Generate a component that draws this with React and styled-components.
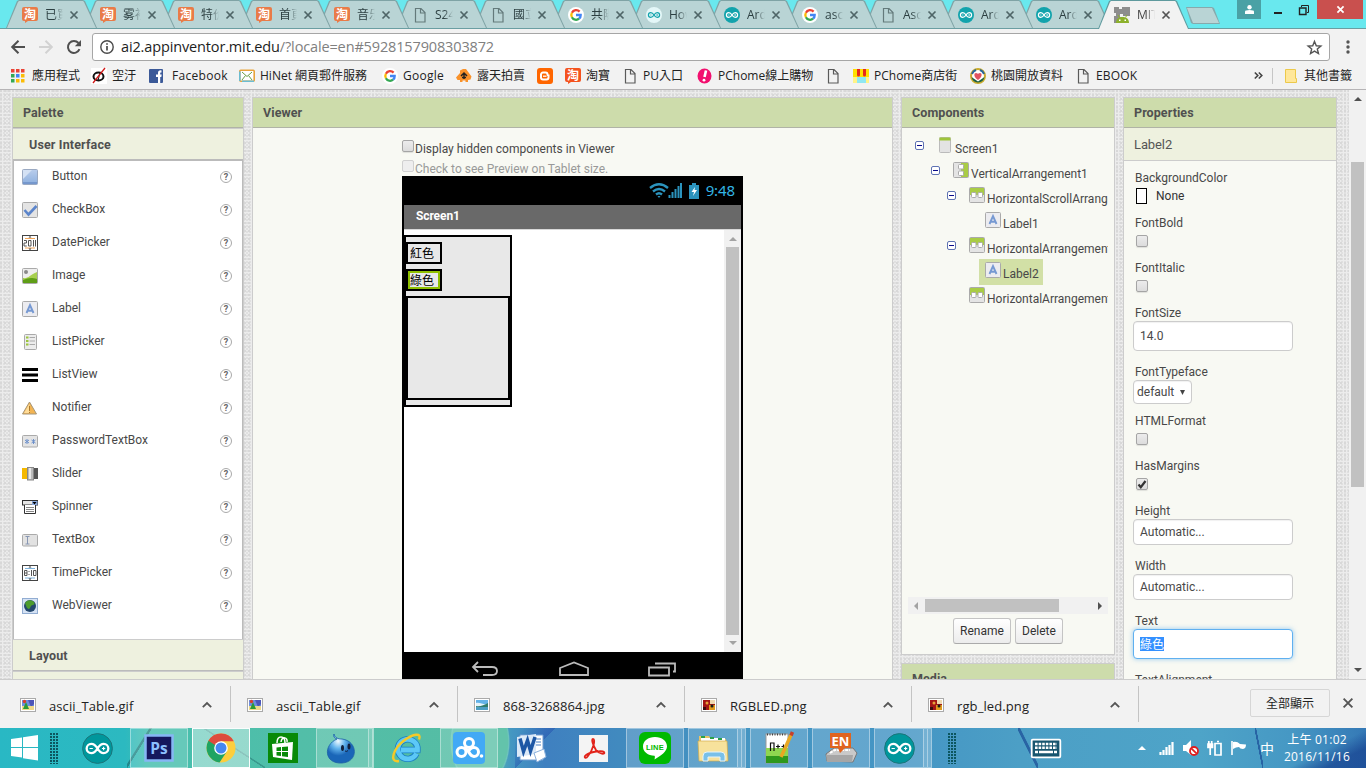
import React from "react";
import styled, { createGlobalStyle, css } from "styled-components";

const UI = `"Open Sans", "Noto Sans CJK TC", sans-serif`;
const CJK = `"Noto Sans CJK TC", "Open Sans", sans-serif`;
const RB = `Roboto, "Noto Sans CJK TC", sans-serif`;

const Global = createGlobalStyle`
  * { box-sizing: border-box; }
  html, body { margin: 0; padding: 0; overflow: hidden; }
  body { font-family: ${UI}; font-size: 12px; color: #333; }
  svg { display: block; flex: none; overflow: visible; }
`;

const Screen = styled.div`
  width: 1366px;
  height: 768px;
  display: flex;
  flex-direction: column;
  overflow: hidden;
  background: #f2f2f2;
`;

/* ---------- tab strip ---------- */
const TabStrip = styled.div`
  height: 29px;
  flex: none;
  display: flex;
  align-items: flex-start;
  padding-left: 6px;
  background: #69e8ee;
  border-bottom: 1px solid #6a9ea2;
  position: relative;
`;
const TabBox = styled.div`
  width: 78px;
  height: 28px;
  flex: none;
  position: relative;
  z-index: ${(p) => p.$z};
  display: flex;
  align-items: center;
  padding: 2px 0 0 16px;
  &::before, &::after {
    content: "";
    position: absolute;
    z-index: -1;
    left: 0;
    top: 0;
    width: 91px;
    height: ${(p) => (p.$active ? 29 : 28)}px;
    background: ${(p) => (p.$active ? "#5f9a9e" : "#7fa3a5")};
    clip-path: polygon(0 100%, 11px 1px, 13px 0, 77px 0, 79px 1px, 91px 100%);
  }
  &::after {
    background: ${(p) => (p.$active ? "#f2f2f2" : "#b9d4d5")};
    clip-path: polygon(1px 100%, 12px 2px, 13px 1px, 77px 1px, 78px 2px, 90px 100%);
  }
`;
const TabTitle = styled.span`
  width: 18px;
  margin-left: 7px;
  overflow: hidden;
  white-space: nowrap;
  font: 12px/18px ${UI};
  color: ${(p) => (p.$active ? "#444" : "#2c3f41")};
  mask-image: linear-gradient(90deg, #000 50%, transparent 100%);
`;
const TabClose = styled.span`
  display: flex;
  margin-left: 7px;
`;
const NewTab = styled.div`
  width: 34px;
  height: 17px;
  margin: 7px 0 0 10px;
  background: #86a9ac;
  clip-path: polygon(0 0, 26px 0, 28px 1px, 34px 100%, 7px 100%, 5px 94%);
  &::after {
    content: "";
    display: block;
    width: 34px;
    height: 17px;
    background: #b9d4d5;
    clip-path: polygon(1px 1px, 26px 1px, 33px 16px, 7px 16px);
  }
`;
const WinControls = styled.div`
  margin-left: auto;
  display: flex;
  height: 19px;
`;
const WinBtn = styled.div`
  width: ${(p) => p.$w}px;
  height: 19px;
  margin-right: ${(p) => p.$mr || 0}px;
  background: ${(p) => p.$bg || "transparent"};
  display: flex;
  align-items: center;
  justify-content: center;
`;

/* ---------- toolbar ---------- */
const Toolbar = styled.div`
  height: 34px;
  flex: none;
  display: flex;
  align-items: center;
  padding: 2px 0 0 10px;
`;
const NavBtn = styled.div`
  width: 28px;
  height: 16px;
  flex: none;
`;
const Omnibox = styled.div`
  width: 1238px;
  height: 28px;
  margin: 0 16px 0 -2px;
  border: 1px solid #a6a6a6;
  border-radius: 3px;
  background: #fff;
  display: flex;
  align-items: center;
  padding: 0 7px 0 7px;
`;
const Url = styled.span`
  flex: 1;
  margin-left: 7px;
  white-space: nowrap;
  font: 14.5px/24px ${UI};
  letter-spacing: -0.14px;
  color: #808080;
  b { font-weight: 400; color: #1d1d1d; }
`;

/* ---------- bookmarks ---------- */
const Bookmarks = styled.div`
  height: 27px;
  flex: none;
  display: flex;
  align-items: center;
  padding: 0 0 1px 9px;
  border-bottom: 1px solid #b6b4b6;
`;
const Bookmark = styled.div`
  width: ${(p) => p.$w}px;
  flex: none;
  display: flex;
  align-items: center;
  gap: ${(p) => p.$gap || 5}px;
  white-space: nowrap;
  font: 12px/18px ${UI};
  letter-spacing: ${(p) => p.$ls || 0}px;
  color: #222;
`;
const Overflow = styled.div`
  width: 137px;
  flex: none;
  display: flex;
  justify-content: flex-end;
  padding-right: 9px;
`;
const BookmarkSep = styled.div`
  width: 1px;
  height: 16px;
  margin-right: 11px;
  background: #c6c6c6;
`;

/* ---------- page ---------- */
const Page = styled.div`
  height: 589px;
  flex: none;
  display: flex;
  align-items: flex-start;
  overflow: hidden;
  padding-left: 12px;
  background-color: #ececec;
  background-image:
    radial-gradient(circle at 1px 1px, #d8d8d8 0.8px, transparent 1px),
    radial-gradient(circle at 1px 1px, #e0e0e0 0.8px, transparent 1px);
  background-size: 4px 4px, 3px 3px;
`;
const Column = styled.div`
  width: ${(p) => p.$w}px;
  margin: 7px ${(p) => p.$mr}px 0 0;
  display: flex;
  flex-direction: column;
  gap: 8px;
  flex: none;
`;
const Panel = styled.div`
  height: ${(p) => p.$h || 620}px;
  flex: none;
  border: 1px solid #ccc;
  background: #f8f9f3;
`;
const PanelHead = styled.div`
  height: 30px;
  padding-left: 10px;
  background: #cddcab;
  border-bottom: 1px solid #b0b3a6;
  font: bold 12.5px/30px ${RB};
  letter-spacing: 0.08px;
  color: #505050;
`;
const PaletteHead = styled.div`
  height: 32px;
  padding-left: 16px;
  background: #eef1df;
  border-top: 1px solid #ccc;
  border-bottom: 1px solid #bbb;
  font: bold 12.5px/31px ${RB};
  letter-spacing: 0.15px;
  color: #505050;
`;
const PaletteBody = styled.div`
  height: 479px;
  background: #fff;
  border: 1px solid #bbb;
  border-bottom: 0;
  & > :first-child { margin-top: -1px; }
`;
const PaletteRow = styled.div`
  height: 33px;
  display: flex;
  align-items: center;
  padding: 0 9px 0 8px;
  font: 12px/18px ${RB};
  color: #484848;
`;
const PaletteName = styled.span`
  flex: 1;
  margin-left: 14px;
  padding-bottom: 2px;
`;
const Help = styled.span`
  width: 12px;
  height: 12px;
  margin-right: 1px;
  border: 1px solid #aaa;
  border-radius: 50%;
  font: bold 9px/10px ${RB};
  text-align: center;
  color: #666;
`;

/* ---------- viewer ---------- */
const Stage = styled.div`
  padding: 11px 0 0 149px;
`;
const CheckLine = styled.div`
  height: ${(p) => (p.$off ? 17 : 20)}px;
  display: flex;
  align-items: flex-start;
  gap: 1px;
  font: 12px/20px ${RB};
  color: ${(p) => (p.$off ? "#999" : "#484848")};
`;
const Check = styled.i`
  width: 12px;
  height: 12px;
  flex: none;
  margin-top: 1px;
  border: 1px solid ${(p) => (p.$off ? "#d0d0d0" : "#a5a5a5")};
  border-radius: 2px;
  background: ${(p) => (p.$off ? "#eee" : "linear-gradient(#ececec, #dcdcdc)")};
  box-shadow: ${(p) => (p.$off ? "none" : "0 1px 1px rgba(0,0,0,.1)")};
`;
const Phone = styled.div`
  width: 341px;
  height: 510px;
  background: #000;
  padding: 0 2px;
`;
const StatusBar = styled.div`
  height: 29px;
  display: flex;
  align-items: center;
  justify-content: flex-end;
  gap: 7px;
  padding-right: 6px;
  color: #33b5e5;
  font: 15px/29px "Noto Sans", sans-serif;
  letter-spacing: -0.1px;
`;
const TitleBar = styled.div`
  height: 25px;
  padding-left: 12px;
  background: #696969;
  border-bottom: 1px solid #d8d8d8;
  font: bold 12px/23px ${RB};
  letter-spacing: -0.1px;
  color: #fff;
`;
const Canvas = styled.div`
  height: 422px;
  display: flex;
  align-items: flex-start;
  background: #fff;
`;
const Arrangement = styled.div`
  width: 108px;
  height: 172px;
  margin: 5px auto 0 0;
  padding: 5px 0;
  display: flex;
  flex-direction: column;
  gap: 5px;
  border: 2px solid #000;
  background: #e8e8e8;
`;
const LabelBox = styled.div`
  width: 36px;
  height: 22px;
  border: 2px solid #000;
  font: 12px/18px ${CJK};
  color: #000;
  & > span {
    display: block;
    height: 18px;
    padding-left: 2px;
    white-space: nowrap;
    line-height: 17px;
    ${(p) => p.$sel && css`box-shadow: inset 0 0 0 2px #8fc000;`}
  }
`;
const EmptyBox = styled.div`
  height: 104px;
  border: 2px solid #000;
`;
const VScroll = styled.div`
  width: 17px;
  height: ${(p) => p.$h}px;
  flex: none;
  display: flex;
  flex-direction: column;
  align-items: center;
  background: #f1f1f1;
  padding: 7px 0;
`;
const Thumb = styled.div`
  width: ${(p) => p.$w}px;
  height: ${(p) => p.$h}px;
  margin: ${(p) => p.$m};
  background: #c1c1c1;
`;
const Arrow = styled.i`
  display: block;
  width: 0;
  height: 0;
  border: 4px solid transparent;
  ${(p) => p.$dir === "up" && css`border-top: 0; border-bottom-color: ${p.$c};`}
  ${(p) => p.$dir === "down" && css`border-bottom: 0; border-top-color: ${p.$c};`}
  ${(p) => p.$dir === "left" && css`border-left: 0; border-right-color: ${p.$c};`}
  ${(p) => p.$dir === "right" && css`border-right: 0; border-left-color: ${p.$c};`}
`;
const NavKeys = styled.div`
  height: 27px;
  display: flex;
  justify-content: space-between;
  padding: 9px 65px 0 67px;
`;

/* ---------- components tree ---------- */
const TreeArea = styled.div`
  height: 469px;
  width: 200px;
  margin: 0 6px;
  padding-top: 6px;
  overflow: hidden;
`;
const TreeRow = styled.div`
  height: 25px;
  display: flex;
  align-items: flex-start;
  padding: 3px 0 0 ${(p) => p.$x}px;
  white-space: nowrap;
  font: 12px/24px ${RB};
  color: #484848;
`;
const TreeToggle = styled.span`
  width: 9px;
  height: 9px;
  flex: none;
  margin: 4px ${(p) => p.$gap}px 0 0;
  border: 1px solid #5f73b3;
  border-radius: 2px;
  background: #fff;
  padding: 3px 1px;
  &::after { content: ""; display: block; height: 1px; background: #0b0b8a; }
`;
const TreeName = styled.span`
  margin-left: ${(p) => p.$ml || 2}px;
`;
const Selected = styled.span`
  height: 26px;
  width: 64px;
  margin: -3px 0 0 0;
  padding: 3px 6px;
  display: flex;
  background: #d2e0a6;
`;
const HScroll = styled.div`
  height: 17px;
  width: 200px;
  margin: 0 6px;
  padding: 0 6px;
  display: flex;
  align-items: center;
  justify-content: space-between;
  background: #f1f1f1;
`;
const Buttons = styled.div`
  display: flex;
  gap: 4px;
  padding: 4px 0 0 51px;
`;
const Btn = styled.div`
  width: ${(p) => p.$w}px;
  height: 26px;
  border: 1px solid #c4c4c4;
  border-bottom-color: #aaa;
  border-radius: 3px;
  background: linear-gradient(#fff, #ececec);
  text-align: center;
  font: 12px/25px ${RB};
  color: #333;
`;

/* ---------- properties ---------- */
const SubHead = styled.div`
  height: 33px;
  padding-left: 10px;
  background: #eef1df;
  border-bottom: 1px solid #ccc;
  font: 13px/33px ${RB};
  letter-spacing: -0.1px;
  color: #555;
`;
const Props = styled.div`
  padding: 9px 0 0 9px;
`;
const Prop = styled.div`
  height: ${(p) => p.$h}px;
`;
const PropLabel = styled.div`
  height: 16px;
  padding-left: 2px;
  font: 12px/16px ${RB};
  color: #484848;
`;
const Field = styled.div`
  width: ${(p) => p.$w || 160}px;
  height: ${(p) => p.$h}px;
  padding-left: ${(p) => p.$pl || 6}px;
  border: 1px solid ${(p) => (p.$focus ? "#5fb0f0" : "#ccc")};
  border-radius: 4px;
  background: #fff;
  display: flex;
  align-items: center;
  gap: 6px;
  font: 12px/16px ${RB};
  color: #484848;
  box-shadow: ${(p) => (p.$focus ? "0 0 5px rgba(82,168,236,.6)" : "inset 0 1px 1px rgba(0,0,0,.06)")};
`;
const Highlight = styled.span`
  height: 14px;
  line-height: 13px;
  font-family: ${CJK};
  background: #3390ff;
  color: #fff;
`;
const PropCheck = styled(Check)`
  display: block;
  margin: 4px 0 0 3px;
`;
const ColorRow = styled.div`
  display: flex;
  align-items: center;
  gap: 9px;
  padding: 2px 0 0 3px;
  font: 12px/16px ${RB};
`;
const Swatch = styled.i`
  width: 11px;
  height: 16px;
  border: 1px solid #000;
  background: #fff;
`;

/* ---------- download shelf ---------- */
const Shelf = styled.div`
  height: 49px;
  flex: none;
  display: flex;
  align-items: flex-start;
  border-top: 1px solid #ccc;
  background: #f2f2f2;
`;
const Download = styled.div`
  width: ${(p) => (p.$first ? 231 : 227)}px;
  height: 36px;
  margin-top: 6px;
  padding: 1px 18px 0 ${(p) => (p.$first ? 20 : 16)}px;
  display: flex;
  align-items: center;
  border-right: 1px solid #c4c4c4;
  color: #222;
  font: 13px/20px ${UI};
  letter-spacing: 0.1px;
`;
const FileName = styled.span`
  flex: 1;
  margin: 3px 0 0 13px;
`;
const ShowAll = styled.div`
  width: 80px;
  height: 28px;
  margin: 9px 13px 0 auto;
  border: 1px solid #d6d6d6;
  border-radius: 2px;
  text-align: center;
  font: 12px/26px ${CJK};
  color: #222;
`;
const ShelfClose = styled.div`
  margin: 18px 13px 0 0;
`;

/* ---------- taskbar ---------- */
const Taskbar = styled.div`
  height: 40px;
  flex: none;
  display: flex;
  align-items: center;
  background:
    linear-gradient(to top left, transparent 49%, rgba(20,85,90,.5) 50% 54%, transparent 56%) 127px 0 / 25px 40px no-repeat,
    linear-gradient(to top right, transparent 49%, rgba(20,85,90,.35) 49.5% 51%, transparent 52%) 203px 0 / 62px 40px no-repeat,
    radial-gradient(ellipse 30px 44px at 480px 14px, #63c3ab 0 92%, rgba(120,205,190,.8) 96%, transparent 100%),
    linear-gradient(to top left, transparent 49%, rgba(30,70,170,.4) 50%, transparent 90%) 515px 0 / 40px 40px no-repeat,
    linear-gradient(to top right, transparent 46%, rgba(25,75,150,.7) 48% 54%, transparent 56%) 1018px 0 / 20px 40px no-repeat,
    linear-gradient(to top right, transparent 44%, rgba(25,75,150,.7) 46% 56%, transparent 58%) 1255px 0 / 8px 40px no-repeat,
    linear-gradient(to bottom right, transparent 52%, rgba(20,60,140,.65) 75%) 1285px 0 / 81px 40px no-repeat,
    linear-gradient(90deg, #29b8c4 0, #2cb9c0 125px, #45bfae 150px, #52bea8 300px, #55bda4 480px, #4fabb4 498px, #4496c2 512px, #3f80c0 545px, #418abf 620px, #4595c2 740px, #4495c4 900px, #4c9fc6 1020px, #4ea4c8 1200px, #4698c4 1290px, #3579b6 1366px);
`;
const StartBtn = styled.div`
  width: 50px;
  padding-left: 11px;
`;
const Grip = styled.div`
  width: 9px;
  height: 31px;
  margin: 0 ${(p) => p.$mr || 0}px 0 ${(p) => p.$ml || 0}px;
  background-image: radial-gradient(circle at 1px 1px, #0c5660 0.9px, transparent 1.1px);
  background-size: 3px 3px;
`;
const Slot = styled.div`
  width: 58px;
  height: 40px;
  margin: 0 2px;
  flex: none;
  display: flex;
  align-items: center;
  justify-content: center;
  padding-right: ${(p) => p.$stack || 0}px;
  ${(p) => p.$open && css`
    border: 1px solid rgba(255,255,255,${p.$active ? 0.95 : 0.4});
    background: rgba(255,255,255,${p.$active ? 0.42 : 0.17});
  `}
  ${(p) => p.$stack && css`
    background-image: repeating-linear-gradient(90deg, rgba(255,255,255,.45) 0 1px, rgba(255,255,255,.1) 1px 4px);
    background-size: ${p.$stack}px 100%;
    background-position: right;
    background-repeat: no-repeat;
  `}
`;
const Tray = styled.div`
  flex: 1;
  display: flex;
  align-items: center;
  padding-left: 74px;
`;
const TrayItem = styled.div`
  margin-right: ${(p) => p.$mr}px;
  font: 14px/18px ${CJK};
  color: #fff;
`;
const Clock = styled.div`
  width: 68px;
  margin-top: -1px;
  text-align: center;
  white-space: nowrap;
  font: 12px/17px ${UI};
  letter-spacing: 0.25px;
  color: #fff;
`;

/* ---------- icons ---------- */
const Taobao = ({ dim }) => (
  <svg width="16" height="16" viewBox="0 0 16 16">
    <path d="M2 0h12a2 2 0 0 1 2 2v10a2 2 0 0 1-2 2H6l-3 2v-2H2a2 2 0 0 1-2-2V2a2 2 0 0 1 2-2z" fill={dim ? "#e97b48" : "#f4531f"} />
    <text x="8" y="11.6" fontSize="12" fontWeight="700" fill="#fff" textAnchor="middle" fontFamily="Noto Sans CJK TC">淘</text>
  </svg>
);
const Doc = ({ c = "#5a5a5a" }) => (
  <svg width="16" height="16" viewBox="0 0 16 16" fill="none" stroke={c} strokeWidth="1.2">
    <path d="M3.5 1.5h5.500l4 4v9.500h-9.500zM8.500 1.500v4.500h4.500" />
  </svg>
);
const GoogleG = () => (
  <svg width="16" height="16" viewBox="0 0 16 16" fill="none" strokeWidth="2.3">
    <circle cx="8" cy="8" r="8" fill="#fff" />
    <path d="M11.600 4.600A4.700 4.700 0 0 0 3.900 5.800" stroke="#ea4335" />
    <path d="M3.900 5.800a4.700 4.700 0 0 0 0 4.500" stroke="#fbbc05" />
    <path d="M3.900 10.200a4.700 4.700 0 0 0 7.200 1.500" stroke="#34a853" />
    <path d="M11.100 11.700A4.700 4.700 0 0 0 12.700 8H8" stroke="#4285f4" />
  </svg>
);
const Arduino = ({ s = 16, light, ring }) => (
  <svg width={s} height={s} viewBox="0 0 16 16">
    <circle cx="8" cy="8" r={ring ? 7.7 : 8} fill={light ? "#e4f7f8" : ring ? "#00979c" : "#12a3ac"} stroke={ring ? "#1c7479" : "none"} strokeWidth=".5" />
    <g fill="none" stroke={light ? "#12a3ac" : "#fff"} strokeWidth="1.2">
      <path d="M8 8C7 6.300 6.200 5.600 4.800 5.600a2.400 2.400 0 0 0 0 4.800C6.200 10.400 7 9.700 8 8s1.800-2.400 3.200-2.400a2.400 2.400 0 0 1 0 4.800C9.800 10.400 9 9.700 8 8z" />
      <path d="M3.900 8h1.700M10.300 8h1.700M11.150 7.150v1.700" strokeWidth=".6" />
    </g>
  </svg>
);
const Mit = () => (
  <svg width="16" height="16" viewBox="0 0 16 16">
    <path d="M0 0h5v2h3V0h8v9H9V7H6v3h3v3l-4 3H0V9h2V6H0z" fill="#8d8d8d" />
    <path d="M2 16c0-4 2.500-6 6.500-6s6.500 2 6.500 6z" fill="#8db12c" />
    <path d="M4 8l1.500 2.500M13 8l-1.500 2.500" stroke="#8db12c" />
    <rect x="5" y="12.500" width="1.500" height="1.500" fill="#fff" /><rect x="10.500" y="12.500" width="1.500" height="1.500" fill="#fff" />
  </svg>
);
const Cross = ({ s = 8, c = "#4f6567", w = 1.7 }) => (
  <svg width={s} height={s} viewBox="0 0 8 8" stroke={c} strokeWidth={w}><path d="M.5.5l7 7M7.500.5l-7 7" /></svg>
);
const AppsIcon = () => {
  const c = ["#ea4335", "#ea4335", "#ea4335", "#34a853", "#4285f4", "#fbbc05", "#34a853", "#fbbc05", "#fbbc05"];
  return (
    <svg width="17" height="16" viewBox="0 0 17 16">
      {c.map((f, i) => <rect key={i} x={2 + (i % 3) * 5} y={1 + Math.floor(i / 3) * 5} width="3.500" height="3.500" fill={f} />)}
    </svg>
  );
};
const AirIcon = () => (
  <svg width="16" height="16" viewBox="0 0 16 16"><rect width="16" height="16" fill="#fff" />
    <ellipse cx="7.500" cy="8.500" rx="5" ry="4" fill="none" stroke="#111" strokeWidth="2" /><path d="M7 13l2-9" stroke="#111" /><path d="M2 15L14 0" stroke="#d01818" strokeWidth="1.300" /></svg>
);
const FbIcon = () => (
  <svg width="16" height="16" viewBox="0 0 16 16"><rect x="0" y="1" width="14" height="14" rx="1" fill="#3b5998" />
    <path d="M9 15V9H7V6.500h2V5c0-2 1-2.800 3.500-2.600v2.100c-1.100-.1-1.300.1-1.300.9v1.100h1.500L12.300 9h-1.100v6z" fill="#fff" /></svg>
);
const HinetIcon = () => (
  <svg width="16" height="16" viewBox="0 0 16 16"><rect x=".8" y="2.300" width="14.400" height="11" rx="1" fill="#fff" stroke="#e8a33a" strokeWidth="1.600" />
    <path d="M.8 13V3.500M3 13.300h12" stroke="#6cbcd0" strokeWidth="1.600" /><path d="M3 4l5 4.500L13 4M3 12l3.500-4.500M13 12L9.500 7.500" fill="none" stroke="#6a9f43" /></svg>
);
const RutenIcon = () => (
  <svg width="16" height="16" viewBox="0 0 16 16"><path d="M0 9.500L4 5V2.500L7 1h3l5.500 7.500-1 3-2.500.5v2H9.500v-1.500h-3V14H4v-2H1.500z" fill="#f9922b" /><path d="M8 11V5M5 8l3-3 3 3M6 9.500h4" stroke="#222" strokeWidth="1.500" fill="none" /></svg>
);
const BloggerIcon = () => (
  <svg width="16" height="16" viewBox="0 0 16 16"><rect width="16" height="16" rx="3" fill="#ff6600" /><path d="M6 4.500h2.500a2 2 0 0 1 2 2c0 1 .5 1 1 1v2a2 2 0 0 1-2 2H6a2 2 0 0 1-2-2v-3a2 2 0 0 1 2-2z" fill="none" stroke="#fff" strokeWidth="2" /><path d="M6 8.200h3.500" stroke="#fff" strokeWidth="1.300" /></svg>
);
const PchomeIcon = () => (
  <svg width="16" height="16" viewBox="0 0 16 16"><ellipse cx="7.500" cy="8" rx="7" ry="7.500" fill="#f2106f" /><path d="M9 2.500L7.500 9" stroke="#fff" strokeWidth="2.600" /><circle cx="7" cy="12.200" r="1.400" fill="#fff" /></svg>
);
const ShopIcon = () => (
  <svg width="16" height="16" viewBox="0 0 16 16"><rect y="1" width="16" height="8" fill="#ffe100" /><path d="M4 1h3v6a1.500 1.500 0 0 1-3 0zM10 1h3v6a1.500 1.500 0 0 1-3 0z" fill="#e8291c" /><rect y="9" width="16" height="6" fill="#fff387" /><rect x="4" y="9" width="9" height="6" fill="#8fe7f2" /></svg>
);
const TaoyuanIcon = () => (
  <svg width="16" height="16" viewBox="0 0 16 16"><circle cx="8" cy="8" r="7" fill="#fff" stroke="#c9ab2c" strokeWidth="2" /><path d="M1.500 9a6.600 6.600 0 0 0 13 0L8 13.500z" fill="#1c5f43" /><path d="M2 6a6.500 6.500 0 0 1 4-4M14 6a6.500 6.500 0 0 0-4-4" stroke="#27649b" strokeWidth="2" fill="none" /><path d="M8 12C3 8.500 4 5 6 5c1.300 0 2 1 2 1s.7-1 2-1c2 0 3 3.500-2 7z" fill="#e05361" /></svg>
);
const FolderIcon = () => (
  <svg width="14" height="16" viewBox="0 0 14 16"><path d="M1.500 1.500h10v9h1v4h-11z" fill="#ffe79a" stroke="#ecc94b" /></svg>
);

const Tile = ({ children, fill = "#e4e4e4" }) => (
  <svg width="16" height="16" viewBox="0 0 16 16"><rect x=".5" y=".5" width="15" height="15" rx="1" fill={fill} stroke="#aaa" />{children}</svg>
);
const LabelIcon = () => (
  <Tile fill="#ececf0"><path d="M4.500 12L8 4l3.500 8M5.800 9.800h4.400" stroke="#7699d2" strokeWidth="1.900" fill="none" /></Tile>
);
const paletteIcons = {
  Button: <svg width="16" height="16" viewBox="0 0 16 16"><defs><linearGradient id="gb" x2="0" y2="1"><stop stopColor="#b9cdec" /><stop offset="1" stopColor="#8cafde" /></linearGradient></defs><rect x=".5" y=".5" width="15" height="15" rx="1" fill="url(#gb)" stroke="#9aa9c2" /><path d="M1 1h9L1 10z" fill="#d4e1f4" /><path d="M1 14h14" stroke="#6c8fc7" strokeWidth="1.500" /></svg>,
  CheckBox: <Tile><path d="M2.500 8l4 4.500L14.500 4" stroke="#5c85cb" strokeWidth="2.600" fill="none" /></Tile>,
  DatePicker: <svg width="16" height="16" viewBox="0 0 16 16"><rect x=".5" y=".5" width="15" height="15" fill="#fff" stroke="#444" /><path d="M3 3.500h10M3 13h10" stroke="#f2a65a" /><path d="M8 1l1.500 1.500h-3zM8 15l1.500-1.500h-3z" fill="#333" /><path d="M2 5.500h2.500v2.500H2v3h2.800M6.500 5.500h2.500v5.500H6.500zM11.500 5v6.500M13.500 5v6.500" stroke="#555" fill="none" /></svg>,
  Image: <Tile fill="#eee"><circle cx="4" cy="4" r="2" fill="#8a8a8a" /><path d="M1 10c5 1 7-3 14-6v11H1z" fill="#a7cf4f" /><path d="M1 12c5-2 8-3 14-1v4H1z" fill="#5f9e17" /></Tile>,
  Label: <LabelIcon />,
  ListPicker: <svg width="16" height="16" viewBox="0 0 16 16"><rect x="2.500" y=".5" width="12" height="15" rx="1" fill="#ececec" stroke="#aaa" /><path d="M4 3.500h2.500M4 7h2.500M4 10.500h2.500" stroke="#9bc53d" strokeWidth="2" /><path d="M7.500 3.500H13M7.500 7H13M7.500 10.500H13" stroke="#aaa" /></svg>,
  ListView: <svg width="16" height="16" viewBox="0 0 16 16"><path d="M0 2.500h16M0 8h16M0 13.500h16" stroke="#000" strokeWidth="3" /></svg>,
  Notifier: <svg width="16" height="16" viewBox="0 0 16 16"><path d="M7.500 2L14.500 14H.5z" fill="#f3b452" stroke="#a69678" /><path d="M7.500 3.500v9.500H2z" fill="#ffdc98" /><path d="M7.500 6v5M7.500 12v1" stroke="#ad7a2b" /></svg>,
  PasswordTextBox: <svg width="16" height="16" viewBox="0 0 16 16"><rect x=".5" y="2.500" width="15" height="11.500" rx="1" fill="#e4e4e4" stroke="#aaa" /><path d="M5 6v5M3 7l4 3M7 7l-4 3M11.500 6v5M9.500 7l4 3M13.500 7l-4 3" stroke="#6c90cb" /></svg>,
  Slider: <svg width="16" height="16" viewBox="0 0 16 16"><path d="M0 2h6v11H0z" fill="#f5b800" /><path d="M10 2h6v11h-6z" fill="#555" /><rect x="5.500" y="1.500" width="6" height="12.500" fill="#bbb" stroke="#888" /><path d="M8 2v11" stroke="#e8e8e8" strokeWidth="2" /></svg>,
  Spinner: <svg width="16" height="16" viewBox="0 0 16 16"><rect x=".5" y="1.500" width="15" height="4.500" fill="#e8e8e8" stroke="#333" /><rect x="10" y="2" width="5.500" height="4" fill="#8caade" /><path d="M10.500 3h4l-2 2.500z" fill="#000" /><path d="M2.500 6v8.500h11V6" fill="#fff" stroke="#333" /><path d="M4 8.500h8M4 10.500h8M4 12.500h8" stroke="#888" /></svg>,
  TextBox: <svg width="16" height="16" viewBox="0 0 16 16"><rect x=".5" y="2.500" width="15" height="11.500" rx="1" fill="#e2e2e2" stroke="#aaa" /><path d="M3.500 4.500h4M3.500 12h4M5.500 4.500V12" stroke="#8897b3" /></svg>,
  TimePicker: <svg width="16" height="16" viewBox="0 0 16 16"><rect x=".5" y=".5" width="15" height="15" fill="#fff" stroke="#444" /><path d="M3 3.500h10M3 13h10" stroke="#7fb3dd" /><path d="M8 1l1.500 1.500h-3zM8 15l1.500-1.500h-3z" fill="#333" /><path d="M2.500 5.500H5v5H2.500zM2.500 8H5M7 6v1M7 9v1M9.500 5v6M11.500 5.500H14v5h-2.500z" stroke="#555" fill="none" /></svg>,
  WebViewer: <svg width="16" height="16" viewBox="0 0 16 16"><rect x=".5" y=".5" width="15" height="15" fill="#d5e2f4" stroke="#92add2" /><circle cx="8" cy="8" r="6" fill="#24486e" /><path d="M3 5c3-4 8-3 9.500 0 0 3-3 1-4 4s-3 2-4 0z" fill="#4c9c2e" /></svg>,
};
const ScreenIcon = () => <svg width="12" height="16" viewBox="0 0 12 16"><rect x=".5" y=".5" width="11" height="15" rx="1" fill="#e3e3e3" stroke="#bbb" /><rect x=".5" y=".5" width="11" height="3" fill="#9fc53a" /></svg>;
const HArr = () => <Tile><path d="M1 1h14v7H1z" fill="#a9cc45" /><rect x="2.500" y="5.500" width="4.500" height="5" rx="1" fill="#fff" stroke="#aaa" /><rect x="9" y="5.500" width="4.500" height="5" rx="1" fill="#fff" stroke="#aaa" /></Tile>;
const VArr = () => <Tile><path d="M8 1h7v14H8z" fill="#a9cc45" /><rect x="5.500" y="2.500" width="5" height="4.500" rx="1" fill="#fff" stroke="#aaa" /><rect x="5.500" y="9" width="5" height="4.500" rx="1" fill="#fff" stroke="#aaa" /></Tile>;

const FileIcon = ({ kind }) => (
  <svg width="16" height="14" viewBox="0 0 16 14">
    <rect x=".5" y=".5" width="15" height="13" fill="#fff" stroke="#aaa" />
    {kind === "gif" && <><path d="M2 2h12v9H2z" fill="#6d8fe0" /><path d="M8 2h6v4l-3 3z" fill="#4d55b8" /><path d="M2 8h12v4H2z" fill="#efd98a" /><path d="M3 11l3-7 3 7z" fill="#2c9a35" /><circle cx="4.500" cy="3.500" r="1.700" fill="#d8402a" /></>}
    {kind === "jpg" && <><path d="M2 2h12v5H2z" fill="#63b2e8" /><path d="M2 5c4-1 7 2 12 1v3H2z" fill="#e4f3fa" /><path d="M2 8c4 1 8-1 12-3v4H2z" fill="#2f7b6b" /><path d="M2 9h12v3H2z" fill="#4d9ec4" /></>}
    {kind === "png" && <><path d="M2 2h12v10H2z" fill="#a31515" /><path d="M9 2h5v4H9z" fill="#f0d9b0" /><path d="M8 7h6v5H8z" fill="#e09b1d" /><circle cx="6" cy="5" r="1.500" fill="#e9a23a" /><circle cx="11" cy="8" r="1.500" fill="#1b1b1b" /><path d="M2 9h3v3H2z" fill="#3a0d0d" /></>}
  </svg>
);

/* taskbar pictures */
const WinLogo = () => <svg width="27" height="26" viewBox="0 0 27 26" fill="#fff"><path d="M0 4l11-1.600V12H0zM12 2.200L27 0v12H12zM0 13h11v9.600L0 21zM12 13h15v12.500l-15-2.300z" /></svg>;
const PsIcon = () => <svg width="30" height="28" viewBox="0 0 30 28"><rect x="1.500" y="1.500" width="27" height="25" fill="#15185e" stroke="#86b6f5" strokeWidth="2.500" /><text x="15" y="19.500" fontSize="15.500" fontWeight="700" textAnchor="middle" fill="#8cc0ff" fontFamily="Open Sans">Ps</text></svg>;
const ChromeIcon = () => (
  <svg width="30" height="30" viewBox="0 0 30 30"><circle cx="15" cy="15" r="14.500" fill="#fcce3c" />
    <path d="M2.400 7.800A14.500 14.500 0 0 0 13.500 29.400L21 18.300 15 15z" fill="#1fa463" /><path d="M2.400 7.800L9 18.500 15 15V8.200z" fill="#1fa463" />
    <path d="M2.400 7.800A14.500 14.500 0 0 1 27.800 8.200H15L9 12z" fill="#dd4b3e" />
    <circle cx="15" cy="15" r="6.800" fill="#fff" /><circle cx="15" cy="15" r="5.500" fill="#4587f0" /></svg>
);
const StoreIcon = () => <svg width="30" height="30" viewBox="0 0 30 30"><rect width="30" height="30" fill="#088a08" /><path d="M4 11l21-2-1 18-19-3z" fill="#fff" /><path d="M9 10c0-8 8-8 8 0M13 9c1-6 7-5 6 0" stroke="#fff" strokeWidth="1.500" fill="none" /><path d="M8.500 14.500l4.500-.5v4H8.500zM14 14l6-.5V18h-6zM8.500 19H13v4l-4.500-.5zM14 19h6v5l-6-.8z" fill="#088a08" /></svg>;
const DropIcon = () => <svg width="30" height="30" viewBox="2 0 30 30"><defs><radialGradient id="dr" cx=".4" cy=".25"><stop stopColor="#f0faff" /><stop offset=".5" stopColor="#64b5ee" /><stop offset="1" stopColor="#1a66b8" /></radialGradient></defs><path d="M8 1c1 4 4 5 8 5 16 2 17 23 0 24C-2 31-3 12 11 6 8 5 7 3 8 1z" fill="url(#dr)" stroke="#1b5ea5" strokeWidth=".8" /><ellipse cx="16.500" cy="15" rx="1.500" ry="3" fill="#12203c" /><ellipse cx="23" cy="13.500" rx="1.500" ry="3" fill="#12203c" /><path d="M19 18q2 1 3-.5" stroke="#12203c" fill="none" /></svg>;
const IeIcon = () => <svg width="30" height="30" viewBox="0 0 30 30" fill="none"><path d="M24.500 20.500A9.800 9.800 0 1 1 25.500 17H9" stroke="#1b7fc4" strokeWidth="6.400" /><path d="M24.500 20.500A9.800 9.800 0 1 1 25.500 17H9" stroke="#5cc8f7" strokeWidth="4.800" /><path d="M7 28C-4 30 2 15 12 7.500 21 1 30-1 27 6.500" stroke="#f5c928" strokeWidth="2.400" /></svg>;
const CloudIcon = () => <svg width="32" height="32" viewBox="0 0 32 32"><rect width="32" height="32" rx="4" fill="#42a9f5" /><g fill="none" stroke="#fff" strokeWidth="3"><circle cx="16" cy="11" r="4.500" /><circle cx="8.500" cy="20" r="4.500" /><path d="M11 16c5 0 4.500 8.500 10 8.500a4.500 4.500 0 0 0 0-9c-3.500 0-5 2.500-6 5" /></g><circle cx="28.500" cy="24" r="1.800" fill="#fff" /></svg>;
const WordIcon = () => <svg width="30" height="30" viewBox="0 0 30 30"><path d="M4 2h23v25H4z" fill="#fff" stroke="#6f9bd0" /><path d="M17 6h8M18 9h7M18 12h7" stroke="#86abd8" strokeWidth="1.500" /><path d="M1 4l19-3v20L1 24z" fill="#dbe9f8" /><path d="M4 5.500l3.500 13 4-11 3 10.500 4.500-14" stroke="#1d57a5" strokeWidth="3.500" fill="none" /><path d="M18 20l10-4 2 8-9 5z" fill="#fff" stroke="#8bb0dc" /></svg>;
const PdfIcon = () => <svg width="29" height="27" viewBox="0 0 29 27"><rect width="29" height="27" fill="#f4f4f4" /><path d="M14 4c3 0 0 11-5 17-2 3-4 2-3 0 3-4 17-6 19-4 2 3-5 2-8-2-3-5-5-11-3-11z" stroke="#e2231a" strokeWidth="1.800" fill="none" /></svg>;
const LineIcon = () => <svg width="32" height="32" viewBox="0 0 32 32"><rect width="32" height="32" rx="6" fill="#00b900" /><path d="M16 5c7 0 12 4 12 9.500 0 5-6 9-12.500 13 .5-2 .5-3.500 0-3.700C9 23.500 4 20 4 14.500 4 9 9 5 16 5z" fill="#fff" /><text x="16" y="17.500" fontSize="7.500" fontWeight="700" textAnchor="middle" fill="#00b900" fontFamily="Liberation Sans" letterSpacing=".2">LINE</text></svg>;
const ExplorerIcon = () => <svg width="32" height="30" viewBox="0 0 32 30"><path d="M2 3h10l2 3h15v22H2z" fill="#e7c468" /><path d="M4 5h24v4H4z" fill="#fff" /><path d="M4 4h4M13 5h4M21 6h4" stroke="#2ba14a" strokeWidth="2" /><path d="M1 8h29l1 20H2z" fill="#f7e29c" stroke="#d3ac4a" strokeWidth=".7" /><path d="M6 28v-5q0-4 4-4h14q4 0 4 4v5h-5v-4H11v4z" fill="#79c0e8" stroke="#e4f4fc" /></svg>;
const NppIcon = () => <svg width="30" height="32" viewBox="0 0 30 32"><rect x="2" y="2" width="22" height="29" fill="#fff" stroke="#999" /><path d="M2 16h22v15H2z" fill="#8fd650" /><path d="M2 24h22v7H2z" fill="#2f981c" /><path d="M3 2.500h20" stroke="#444" strokeWidth="2" strokeDasharray="1 1.500" /><path d="M6.500 19v-8h3.500v8M12 14.500h4M14 12.500v4M17.500 14.500h4M19.500 12.500v4" stroke="#111" strokeWidth="1.200" fill="none" /><path d="M27 3L17 25" stroke="#e9a721" strokeWidth="3.500" /><path d="M28.500 0l-1.500 3.500" stroke="#c8402a" strokeWidth="3.500" /></svg>;
const EnIcon = () => <svg width="32" height="32" viewBox="0 0 32 32"><path d="M1 22l8-6h19l4 5-4 9-26-1z" fill="#c9c9c9" stroke="#777" /><path d="M1 23h27l-1 7H2z" fill="#a6a6a6" /><path d="M5 21l5-3h15" stroke="#fff" strokeWidth="2" strokeDasharray="3 1" fill="none" /><path d="M5 1h21v15h-6l-5 5-2-5H5z" fill="#e0641e" /><text x="15.500" y="13.500" fontSize="13" fontWeight="700" textAnchor="middle" fill="#fff" fontFamily="Open Sans">EN</text></svg>;
const KeyboardIcon = () => <svg width="30" height="19" viewBox="0 0 30 19"><rect x=".7" y=".7" width="28.600" height="17.600" rx="1" fill="#17556f" stroke="#fff" strokeWidth="1.800" /><path d="M4 5h22M4 8.800h22" stroke="#fff" strokeWidth="2.400" strokeDasharray="2.600 1" /><path d="M4 13h3M8 13h14M23 13h3" stroke="#fff" strokeWidth="2.600" /></svg>;

const tabs = [
  ["t", "已買"], ["t", "雾衫"], ["t", "特价"], ["t", "首頁"], ["t", "音乐"], ["d", "S240"], ["d", "國立"], ["g", "共陽"],
  ["al", "How"], ["a", "Ardu"], ["g", "asci"], ["d", "Ascii"], ["a", "Ardu"], ["a", "Ardu"], ["m", "MIT"],
];
const tabIcon = { t: <Taobao dim />, d: <Doc c="#647a7b" />, g: <GoogleG />, al: <Arduino light />, a: <Arduino />, m: <Mit /> };

const bookmarks = [
  [<AppsIcon />, "應用程式", 82, 0, 6], [<AirIcon />, "空汙", 58], [<FbIcon />, "Facebook", 90, 0.3, 7], [<HinetIcon />, "HiNet 網頁郵件服務", 143],
  [<GoogleG />, "Google", 74, 0.25], [<RutenIcon />, "露天拍賣", 81], [<BloggerIcon />, "", 28], [<Taobao />, "淘寶", 57],
  [<Doc />, "PU入口", 75], [<PchomeIcon />, "PChome線上購物", 128], [<Doc />, "", 28], [<ShopIcon />, "PChome商店街", 117],
  [<TaoyuanIcon />, "桃園開放資料", 105], [<Doc />, "EBOOK", 60, 0.15],
];

const tree = [
  { x: 7, gap: 15, icon: <ScreenIcon />, name: "Screen1", ml: 4 },
  { x: 23, gap: 13, icon: <VArr />, name: "VerticalArrangement1" },
  { x: 39, gap: 13, icon: <HArr />, name: "HorizontalScrollArrangement1" },
  { x: 77, icon: <LabelIcon />, name: "Label1" },
  { x: 39, gap: 13, icon: <HArr />, name: "HorizontalArrangement1" },
  { x: 71, icon: <LabelIcon />, name: "Label2", sel: true },
  { x: 61, icon: <HArr />, name: "HorizontalArrangement2" },
];

const downloads = [["gif", "ascii_Table.gif"], ["gif", "ascii_Table.gif"], ["jpg", "868-3268864.jpg"], ["png", "RGBLED.png"], ["png", "rgb_led.png"]];

const tasks = [
  [<Arduino s={31} ring />, 0], [<PsIcon />, 1], [<ChromeIcon />, 2], [<StoreIcon />, 0], [<DropIcon />, 1, 5], [<IeIcon />, 0], [<CloudIcon />, 1],
  [<WordIcon />, 0], [<PdfIcon />, 0], [<LineIcon />, 1], [<ExplorerIcon />, 1, 8], [<NppIcon />, 1], [<EnIcon />, 1], [<Arduino s={31} ring />, 1, 8],
];

export default function App() {
  return (
    <Screen>
      <Global />
      <TabStrip>
        {tabs.map(([k, t], i) => {
          const active = k === "m";
          return (
            <TabBox key={i} $z={active ? 30 : 20 - i} $active={active}>
              {tabIcon[k]}
              <TabTitle $active={active}>{t}</TabTitle>
              <TabClose><Cross c={active ? "#555" : "#4f6567"} /></TabClose>
            </TabBox>
          );
        })}
        <NewTab />
        <WinControls>
          <WinBtn $w={24} $bg="#4aa1a5" $mr={4}>
            <svg width="9" height="9" viewBox="0 0 9 9" fill="#fff"><circle cx="4.500" cy="2.200" r="2.200" /><path d="M0 9V6.500Q0 5 4.500 5T9 6.500V9z" /></svg>
          </WinBtn>
          <WinBtn $w={26}><svg width="8" height="8" viewBox="0 0 8 8"><path d="M0 7h8" stroke="#222" strokeWidth="2" /></svg></WinBtn>
          <WinBtn $w={26}><svg width="10" height="10" viewBox="0 0 10 10" fill="none" stroke="#222"><path d="M2.500 2V.5h7v7H8" /><path d="M.5 3h6.500v6.500H.5z" strokeWidth="1.400" /></svg></WinBtn>
          <WinBtn $w={46} $bg="#c9504e" $mr={3}><Cross s={7} c="#fff" w={2} /></WinBtn>
        </WinControls>
      </TabStrip>

      <Toolbar>
        <NavBtn><svg width="16" height="16" viewBox="0 0 16 16" fill="none" stroke="#4f4f4f" strokeWidth="2"><path d="M15 8H2.500M8.500 1.700L2.200 8l6.300 6.300" /></svg></NavBtn>
        <NavBtn><svg width="16" height="16" viewBox="0 0 16 16" fill="none" stroke="#d2d2d2" strokeWidth="2"><path d="M1 8h12.500M7.500 1.700L13.800 8l-6.300 6.300" /></svg></NavBtn>
        <NavBtn><svg width="16" height="16" viewBox="0 0 16 16" fill="none" stroke="#4f4f4f" strokeWidth="2"><path d="M13.500 10.200A6 6 0 1 1 12.500 4" /><path d="M15 1v6.200H8.800z" fill="#4f4f4f" stroke="none" /></svg></NavBtn>
        <Omnibox>
          <svg width="14" height="14" viewBox="0 0 14 14" fill="none" stroke="#4a4a4a" strokeWidth="1.400"><circle cx="7" cy="7" r="6.200" /><path d="M7 6v4.500M7 3.200v1.600" strokeWidth="1.700" /></svg>
          <Url><b>ai2.appinventor.mit.edu</b>/?locale=en#5928157908303872</Url>
          <svg width="15" height="15" viewBox="0 0 16 16" fill="none" stroke="#555" strokeWidth="1.500"><path d="M8 1.500l1.900 4.600 4.900.3-3.800 3.200 1.200 4.800L8 11.800l-4.200 2.600L5 9.600 1.200 6.400l4.900-.3z" /></svg>
        </Omnibox>
        <svg width="4" height="14" viewBox="0 0 4 14" fill="#555"><circle cx="2" cy="2" r="1.700" /><circle cx="2" cy="7" r="1.700" /><circle cx="2" cy="12" r="1.700" /></svg>
      </Toolbar>

      <Bookmarks>
        {bookmarks.map(([ic, t, w, ls, gap], i) => <Bookmark key={i} $w={w} $ls={ls} $gap={gap}>{ic}{t}</Bookmark>)}
        <Overflow>
          <svg width="9" height="7" viewBox="0 0 9 7" fill="none" stroke="#444" strokeWidth="1.600"><path d="M.8.5l3 3-3 3M4.800.5l3 3-3 3" /></svg>
        </Overflow>
        <BookmarkSep />
        <Bookmark $w={80} $gap={6}><FolderIcon />其他書籤</Bookmark>
      </Bookmarks>

      <Page>
        <Column $w={232} $mr={8}>
          <Panel>
            <PanelHead>Palette</PanelHead>
            <PaletteHead>User Interface</PaletteHead>
            <PaletteBody>
              {Object.keys(paletteIcons).map((n) => (
                <PaletteRow key={n}>{paletteIcons[n]}<PaletteName>{n}</PaletteName><Help>?</Help></PaletteRow>
              ))}
            </PaletteBody>
            <PaletteHead>Layout</PaletteHead>
            <PaletteHead />
          </Panel>
        </Column>

        <Column $w={641} $mr={8}>
          <Panel>
            <PanelHead>Viewer</PanelHead>
            <Stage>
              <CheckLine><Check /><span>Display hidden components in Viewer</span></CheckLine>
              <CheckLine $off><Check $off /><span>Check to see Preview on Tablet size.</span></CheckLine>
              <Phone>
                <StatusBar>
                  <svg width="33" height="16" viewBox="0 0 33 16" fill="none" stroke="#2b93bd" strokeWidth="2.300">
                    <path d="M1 5q9-7.500 18 0M4 8.500q6-5 12 0M7 11.500q3-2.500 6 0" /><path d="M8.500 13h3L10 15z" fill="#2b93bd" stroke="none" />
                    <path d="M20.500 15v-3M23.500 15v-6M26.500 15V6M29.500 15V3M32 15V0" strokeWidth="2" />
                  </svg>
                  <svg width="10" height="16" viewBox="0 0 10 16"><path d="M0 2h3V0h4v2h3v14H0z" fill="#2b93bd" /><path d="M6 4L2.500 9H5l-1 4 4-6H5.500z" fill="#fff" /></svg>
                  <span>9:48</span>
                </StatusBar>
                <TitleBar>Screen1</TitleBar>
                <Canvas>
                  <Arrangement>
                    <LabelBox><span>紅色</span></LabelBox>
                    <LabelBox $sel><span>綠色</span></LabelBox>
                    <EmptyBox />
                  </Arrangement>
                  <VScroll $h={422}>
                    <Arrow $dir="up" $c="#a3a3a3" />
                    <Thumb $w={13} $h={388} $m="6px 0" />
                    <Arrow $dir="down" $c="#a3a3a3" />
                  </VScroll>
                </Canvas>
                <NavKeys>
                  <svg width="28" height="16" viewBox="0 0 28 16" fill="none" stroke="#bbb" strokeWidth="1.800"><path d="M2 6h19q5 0 5 4t-5 4h-9M7 1L2 6l5 5" /></svg>
                  <svg width="30" height="16" viewBox="0 0 30 16" fill="none" stroke="#bbb" strokeWidth="1.800"><path d="M1 14V7l14-5.500L29 7v7z" /></svg>
                  <svg width="28" height="16" viewBox="0 0 28 16" fill="none" stroke="#bbb" strokeWidth="1.800"><path d="M1 6.500h20v8H1zM7 2.500h20v8h-2" /></svg>
                </NavKeys>
              </Phone>
            </Stage>
          </Panel>
        </Column>

        <Column $w={214} $mr={8}>
          <Panel $h={558}>
            <PanelHead>Components</PanelHead>
            <TreeArea>
              {tree.map((r, i) => (
                <TreeRow key={i} $x={r.x}>
                  {r.gap && <TreeToggle $gap={r.gap} />}
                  {r.sel ? <Selected>{r.icon}<TreeName>{r.name}</TreeName></Selected> : <>{r.icon}<TreeName $ml={r.ml}>{r.name}</TreeName></>}
                </TreeRow>
              ))}
            </TreeArea>
            <HScroll>
              <Arrow $dir="left" $c="#a3a3a3" />
              <Thumb $w={134} $h={13} $m="0 33px 0 0" />
              <Arrow $dir="right" $c="#505050" />
            </HScroll>
            <Buttons><Btn $w={58}>Rename</Btn><Btn $w={48}>Delete</Btn></Buttons>
          </Panel>
          <Panel $h={60}><PanelHead>Media</PanelHead></Panel>
        </Column>

        <Column $w={214} $mr={12}>
          <Panel>
            <PanelHead>Properties</PanelHead>
            <SubHead>Label2</SubHead>
            <Props>
              <Prop $h={45}><PropLabel>BackgroundColor</PropLabel><ColorRow><Swatch />None</ColorRow></Prop>
              <Prop $h={45}><PropLabel>FontBold</PropLabel><PropCheck /></Prop>
              <Prop $h={45}><PropLabel>FontItalic</PropLabel><PropCheck /></Prop>
              <Prop $h={59}><PropLabel>FontSize</PropLabel><Field $h={30}>14.0</Field></Prop>
              <Prop $h={49}><PropLabel>FontTypeface</PropLabel>
                <Field $w={59} $h={24} $pl={3}>default<svg width="5" height="5" viewBox="0 0 5 5"><path d="M0 0h5L2.500 5z" fill="#444" /></svg></Field></Prop>
              <Prop $h={45}><PropLabel>HTMLFormat</PropLabel><PropCheck /></Prop>
              <Prop $h={45}><PropLabel>HasMargins</PropLabel>
                <PropCheck><svg width="10" height="10" viewBox="0 0 10 10"><path d="M1.500 5.500l2.300 2.700L8.500 2" fill="none" stroke="#333" strokeWidth="2.200" /></svg></PropCheck></Prop>
              <Prop $h={55}><PropLabel>Height</PropLabel><Field $h={26}>Automatic...</Field></Prop>
              <Prop $h={55}><PropLabel>Width</PropLabel><Field $h={26}>Automatic...</Field></Prop>
              <Prop $h={59}><PropLabel>Text</PropLabel><Field $h={30} $focus><Highlight>綠色</Highlight></Field></Prop>
              <Prop $h={20}><PropLabel>TextAlignment</PropLabel></Prop>
            </Props>
          </Panel>
        </Column>

        <VScroll $h={589}>
          <Arrow $dir="up" $c="#505050" />
          <Thumb $w={13} $h={325} $m="61px 0 181px" />
          <Arrow $dir="down" $c="#505050" />
        </VScroll>
      </Page>

      <Shelf>
        {downloads.map(([k, n], i) => (
          <Download key={i} $first={i === 0}>
            <FileIcon kind={k} />
            <FileName>{n}</FileName>
            <svg width="10" height="6" viewBox="0 0 10 6" fill="none" stroke="#555" strokeWidth="1.800"><path d="M.8 5.200L5 1l4.200 4.200" /></svg>
          </Download>
        ))}
        <ShowAll>全部顯示</ShowAll>
        <ShelfClose><Cross s={10} c="#555" w={1.500} /></ShelfClose>
      </Shelf>

      <Taskbar>
        <StartBtn><WinLogo /></StartBtn>
        <Grip $mr={7} />
        {tasks.map(([ic, open, stack], i) => <Slot key={i} $open={open > 0} $active={open === 2} $stack={stack}>{ic}</Slot>)}
        <Grip $ml={14} />
        <Tray>
          <TrayItem $mr={77}><KeyboardIcon /></TrayItem>
          <TrayItem $mr={13}><Arrow $dir="up" $c="#fff" /></TrayItem>
          <TrayItem $mr={8}>
            <svg width="16" height="14" viewBox="0 0 16 14"><path d="M1.500 14v-3M4.500 14v-5M7.500 14V6M10.500 14V4M13.500 14V1" stroke="#fff" strokeWidth="2.200" /></svg>
          </TrayItem>
          <TrayItem $mr={8}>
            <svg width="16" height="16" viewBox="0 0 16 16"><path d="M0 5h3l5-5v15l-5-4H0z" fill="#fff" /><circle cx="11" cy="11" r="4" fill="#fff" stroke="#e02020" strokeWidth="1.800" /><path d="M8.300 8.300l5.400 5.400" stroke="#e02020" strokeWidth="1.800" /></svg>
          </TrayItem>
          <TrayItem $mr={8}>
            <svg width="16" height="16" viewBox="0 0 16 16" fill="none" stroke="#fff" strokeWidth="1.700"><path d="M8 3.500h6V15H8zM10 1.500h2" /><path d="M1 4v3.500h4.500V4zM3.200 8v7M1.800 1v3M4.700 1v3" fill="#fff" /></svg>
          </TrayItem>
          <TrayItem $mr={13}>
            <svg width="16" height="16" viewBox="0 0 16 16"><path d="M1 1v14" stroke="#fff" strokeWidth="1.600" /><path d="M2 2q4-1 7 2l6 .5q0 4-3 4.500-3 0-4-2-3 0-6 2z" fill="#fff" /></svg>
          </TrayItem>
          <TrayItem $mr={9}>中</TrayItem>
          <Clock>上午 01:02<br />2016/11/16</Clock>
        </Tray>
      </Taskbar>
    </Screen>
  );
}
